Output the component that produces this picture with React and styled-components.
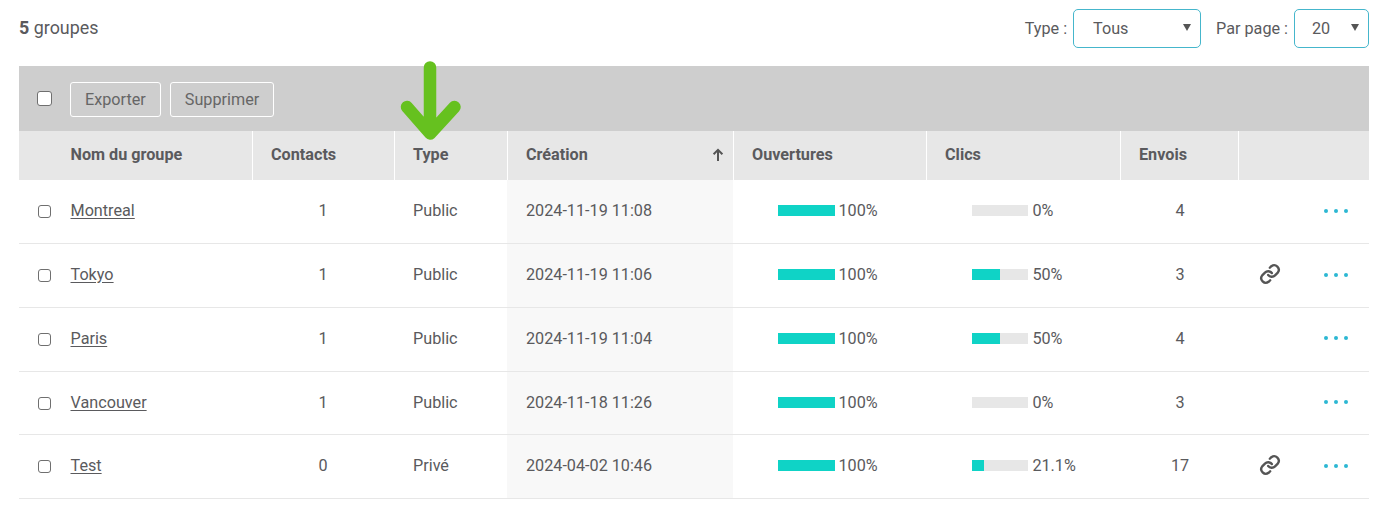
import React from 'react';
import styled, { createGlobalStyle } from 'styled-components';

const COLUMNS = '234px 142px 113px 226px 193px 194px 118px 130px';

const groups = [
  { name: 'Montreal', contacts: 1, type: 'Public', date: '2024-11-19 11:08', opens: 100, clicks: 0, clicksLabel: '0%', sends: 4, link: false },
  { name: 'Tokyo', contacts: 1, type: 'Public', date: '2024-11-19 11:06', opens: 100, clicks: 50, clicksLabel: '50%', sends: 3, link: true },
  { name: 'Paris', contacts: 1, type: 'Public', date: '2024-11-19 11:04', opens: 100, clicks: 50, clicksLabel: '50%', sends: 4, link: false },
  { name: 'Vancouver', contacts: 1, type: 'Public', date: '2024-11-18 11:26', opens: 100, clicks: 0, clicksLabel: '0%', sends: 3, link: false },
  { name: 'Test', contacts: 0, type: 'Privé', date: '2024-04-02 10:46', opens: 100, clicks: 21.1, clicksLabel: '21.1%', sends: 17, link: true },
];

const GlobalStyle = createGlobalStyle`
  html, body {
    margin: 0;
    padding: 0;
    background: #fff;
  }
  body {
    font-family: Roboto, "Liberation Sans", sans-serif;
    font-size: 16.2px;
    color: #5a5a5d;
  }
`;

const Page = styled.div`
  position: relative;
  width: 1350px;
  padding: 9px 8px 0 19px;
`;

const TopBar = styled.div`
  display: flex;
  align-items: center;
  justify-content: space-between;
  height: 39px;
  margin-bottom: 18px;
`;

const Count = styled.div`
  font-size: 17.9px;
  margin-top: -3px;
  strong {
    font-weight: 700;
  }
`;

const Filters = styled.div`
  display: flex;
  align-items: center;
`;

const FilterLabel = styled.label`
  margin-right: 6px;
  margin-left: ${(p) => p.$gap || 0}px;
`;

const SelectWrap = styled.div`
  position: relative;
  width: ${(p) => p.$width}px;
  height: 39px;
  &::after {
    content: '';
    position: absolute;
    right: 10px;
    top: 15px;
    border-left: 4.5px solid transparent;
    border-right: 4.5px solid transparent;
    border-top: 7px solid #555;
    pointer-events: none;
  }
`;

const Select = styled.select`
  appearance: none;
  width: 100%;
  height: 100%;
  box-sizing: border-box;
  border: 1px solid #45b6cc;
  border-radius: 5px;
  background: #fff;
  padding-left: ${(p) => p.$pad}px;
  font: inherit;
  color: #5a5a5d;
`;

const BulkBar = styled.div`
  display: flex;
  align-items: center;
  box-sizing: border-box;
  height: 65px;
  padding-top: 2px;
  background: #cecece;
`;

const HeaderCheck = styled.div`
  display: flex;
  justify-content: center;
  width: 51px;
  margin-top: -3px;
`;

const Button = styled.button`
  height: 35px;
  margin-right: 9px;
  padding: 0 14px;
  border: 1px solid #fff;
  border-radius: 3px;
  background: transparent;
  font: inherit;
  color: #666;
`;

const Checkbox = styled.input.attrs({ type: 'checkbox' })`
  appearance: none;
  box-sizing: border-box;
  width: ${(p) => p.$size}px;
  height: ${(p) => p.$size}px;
  margin: 0;
  border: 1px solid #6f6f6f;
  border-radius: 3px;
  background: #fff;
`;

const HeaderRow = styled.div`
  display: grid;
  grid-template-columns: ${COLUMNS};
  height: 49.45px;
  background: #e7e7e7;
`;

const HeaderCell = styled.div`
  display: flex;
  align-items: center;
  justify-content: space-between;
  padding: 0 9px 2px ${(p) => p.$pad || 18}px;
  border-right: ${(p) => (p.$last ? 'none' : '1px solid #fff')};
  font-weight: 700;
`;

const Row = styled.div`
  display: grid;
  grid-template-columns: ${COLUMNS};
  height: 63.7px;
  box-sizing: border-box;
  border-bottom: 1px solid #e7e7e7;
`;

const Cell = styled.div`
  display: flex;
  align-items: center;
  padding: 0 0 1.62px ${(p) => p.$pad || 18}px;
`;

const CenterCell = styled(Cell)`
  justify-content: center;
  padding-left: 0;
  padding-right: ${(p) => p.$nudge || 0}px;
`;

const SortedCell = styled(Cell)`
  margin: 0 1px 0 -1px;
  padding-left: 19px;
  background: #f8f8f8;
`;

const RowCheck = styled.div`
  display: flex;
  justify-content: center;
  width: 51.5px;
  margin-left: -18px;
  padding-top: 2px;
`;

const GroupLink = styled.a`
  color: #5a5a5d;
  text-decoration: underline;
  text-underline-offset: 2px;
`;

const Track = styled.div`
  width: 56.5px;
  height: 11px;
  margin-right: 4px;
  background: #e7e7e7;
`;

const Fill = styled.div`
  height: 100%;
  background: #0fd3c6;
`;

const Actions = styled.div`
  display: grid;
  grid-template-columns: 60px 52px;
  column-gap: 10px;
  align-items: center;
  justify-items: center;
`;

const LinkIcon = styled.svg`
  width: 22px;
  height: 22px;
  color: #555;
  margin-top: -2px;
`;

const Dots = styled.div`
  display: flex;
  gap: 6px;
`;

const Dot = styled.span`
  width: 4px;
  height: 4px;
  border-radius: 50%;
  background: #2cb7d3;
`;

const Arrow = styled.svg`
  position: absolute;
  left: 395px;
  top: 55px;
  width: 70px;
  height: 90px;
  color: #66c11f;
`;

const Chain = () => (
  <LinkIcon viewBox="0 0 24 24" fill="none" stroke="currentColor" strokeWidth="2.6" strokeLinecap="round" strokeLinejoin="round">
    <path d="M10 13a5 5 0 0 0 7.5.5l3-3a5 5 0 0 0-7-7l-1.7 1.7" />
    <path d="M14 11a5 5 0 0 0-7.5-.5l-3 3a5 5 0 0 0 7 7l1.7-1.7" />
  </LinkIcon>
);

const Progress = ({ value, label }) => (
  <>
    <Track>
      <Fill style={{ width: `${value}%` }} />
    </Track>
    {label}
  </>
);

const App = () => (
  <Page>
    <GlobalStyle />
    <TopBar>
      <Count>
        <strong>5</strong> groupes
      </Count>
      <Filters>
        <FilterLabel htmlFor="type">Type :</FilterLabel>
        <SelectWrap $width={128}>
          <Select id="type" $pad={19} defaultValue="Tous">
            <option>Tous</option>
            <option>Public</option>
            <option>Privé</option>
          </Select>
        </SelectWrap>
        <FilterLabel htmlFor="perPage" $gap={15}>Par page :</FilterLabel>
        <SelectWrap $width={75}>
          <Select id="perPage" $pad={17} defaultValue="20">
            <option>20</option>
            <option>50</option>
          </Select>
        </SelectWrap>
      </Filters>
    </TopBar>

    <BulkBar>
      <HeaderCheck>
        <Checkbox $size={15} />
      </HeaderCheck>
      <Button>Exporter</Button>
      <Button>Supprimer</Button>
    </BulkBar>

    <HeaderRow>
      <HeaderCell $pad={51.5}>Nom du groupe</HeaderCell>
      <HeaderCell>Contacts</HeaderCell>
      <HeaderCell>Type</HeaderCell>
      <HeaderCell>
        Création
        <svg width="12" height="14" viewBox="0 0 12 14" fill="none" stroke="#555" strokeWidth="2">
          <path d="M6 13V2M1.6 6.2 6 1.8l4.4 4.4" />
        </svg>
      </HeaderCell>
      <HeaderCell>Ouvertures</HeaderCell>
      <HeaderCell>Clics</HeaderCell>
      <HeaderCell>Envois</HeaderCell>
      <HeaderCell $last />
    </HeaderRow>

    {groups.map((g) => (
      <Row key={g.name}>
        <Cell>
          <RowCheck>
            <Checkbox $size={13} />
          </RowCheck>
          <GroupLink href="#">{g.name}</GroupLink>
        </Cell>
        <CenterCell $nudge={2}>{g.contacts}</CenterCell>
        <Cell>{g.type}</Cell>
        <SortedCell>{g.date}</SortedCell>
        <Cell $pad={44}>
          <Progress value={g.opens} label={`${g.opens}%`} />
        </Cell>
        <Cell $pad={44.9}>
          <Progress value={g.clicks} label={g.clicksLabel} />
        </Cell>
        <CenterCell>{g.sends}</CenterCell>
        <Cell $pad={1}>
          <Actions>
            {g.link ? <Chain /> : <span />}
            <Dots>
              <Dot />
              <Dot />
              <Dot />
            </Dots>
          </Actions>
        </Cell>
      </Row>
    ))}

    <Arrow viewBox="0 0 70 90" fill="none" stroke="currentColor" strokeWidth="12.5" strokeLinecap="round" strokeLinejoin="round">
      <path d="M35 12.5V78M12 52 35.2 78.5 59.5 52" />
    </Arrow>
  </Page>
);

export default App;
